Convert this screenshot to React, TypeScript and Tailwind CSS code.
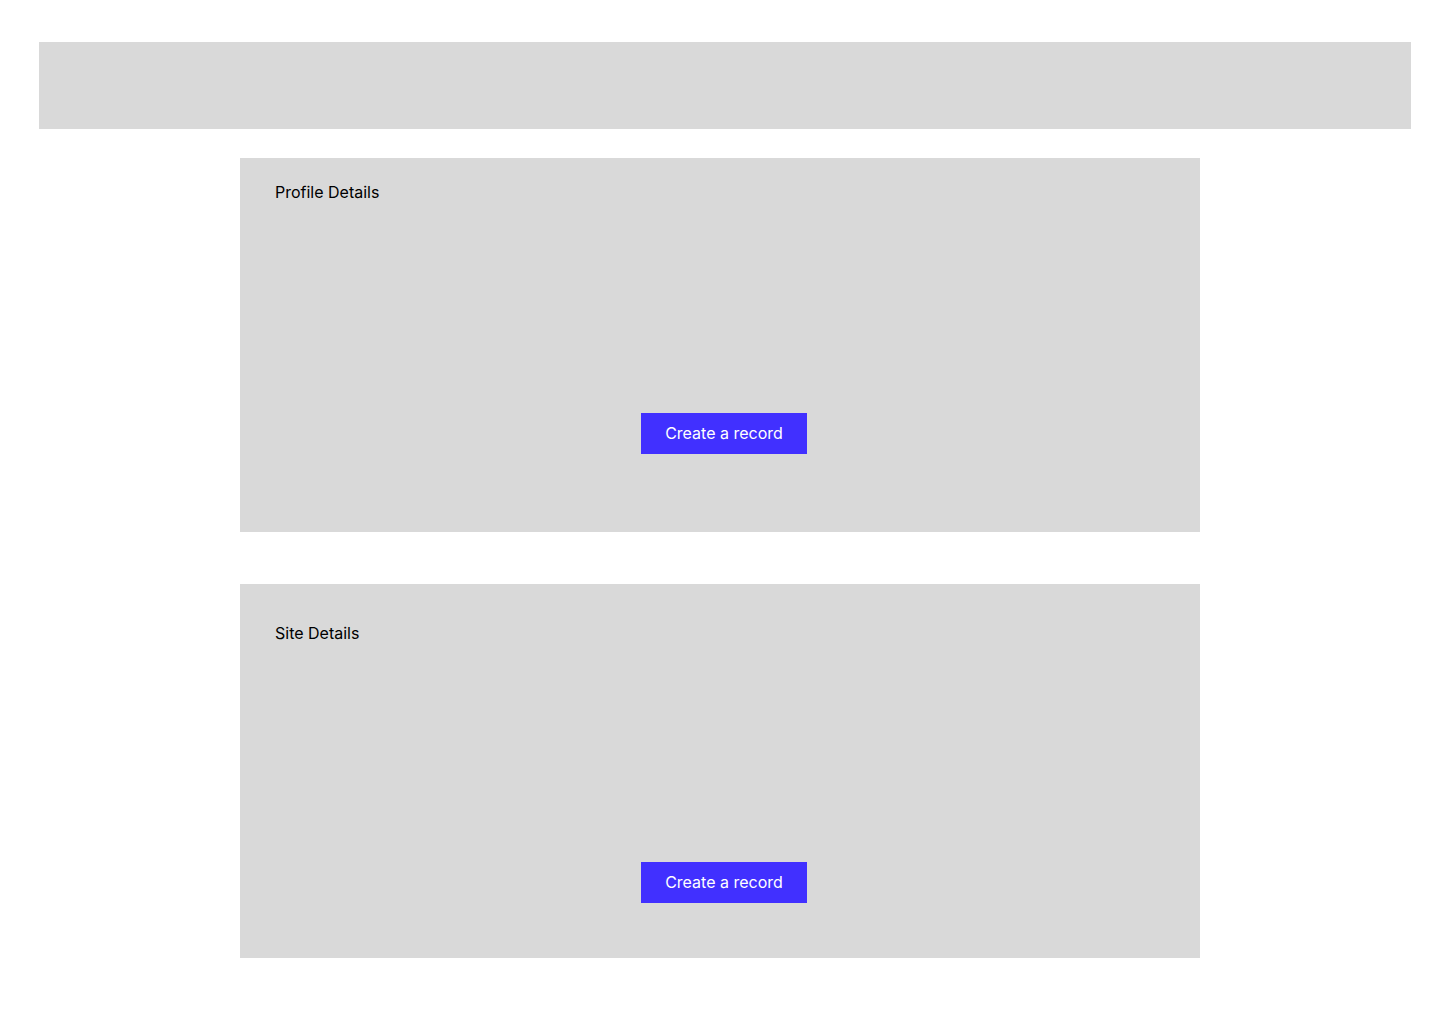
import React from "react";

function Card({ title, titleTop, buttonGap }: { title: string; titleTop: string; buttonGap: string }) {
  return (
    <div className={`mx-auto flex h-[374px] w-[960px] flex-col bg-[#d9d9d9] pl-[35px] ${titleTop}`}>
      <div className="text-[16px] leading-[24px] text-black">{title}</div>
      <button
        className={`ml-[366px] flex h-[41px] w-[166px] items-center justify-center bg-[#4130ff] pb-[2px] text-[16px] font-normal leading-[24px] text-white ${buttonGap}`}
      >
        Create a record
      </button>
    </div>
  );
}

export default function App() {
  return (
    <div className="min-h-[1024px] bg-white pt-[42px]" style={{ fontFamily: "Inter, 'Noto Sans', sans-serif" }}>
      <div className="ml-[39px] mr-[29px] h-[87px] bg-[#d9d9d9]" />
      <div className="mt-[29px]">
        <Card title="Profile Details" titleTop="pt-[22px]" buttonGap="mt-[209px]" />
      </div>
      <div className="mt-[52px]">
        <Card title="Site Details" titleTop="pt-[37px]" buttonGap="mt-[217px]" />
      </div>
    </div>
  );
}
